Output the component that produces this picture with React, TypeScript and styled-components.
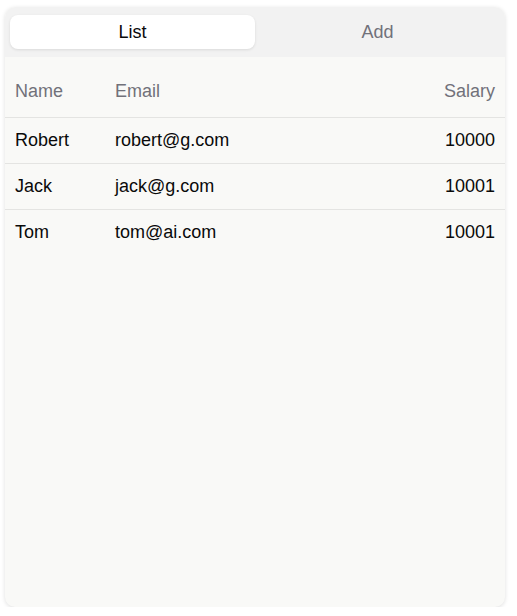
import React, { useState } from "react";
import styled, { createGlobalStyle } from "styled-components";

const Global = createGlobalStyle`
  html, body { margin: 0; padding: 0; background: #ffffff; }
  body { font-family: "Liberation Sans", Arial, Helvetica, sans-serif; }
`;

const Page = styled.div`
  padding: 7px 12px 0 5px;
`;

const Card = styled.div`
  width: 500px;
  height: 600px;
  background: #f9f9f7;
  border-radius: 10px;
  box-shadow: 0 1px 4px rgba(0, 0, 0, 0.13);
  overflow: hidden;
  display: flex;
  flex-direction: column;
`;

const TabBar = styled.div`
  background: #f2f2f2;
  padding: 8px 5px;
  display: grid;
  grid-template-columns: 1fr 1fr;
  border-radius: 10px 10px 0 0;
`;

const Tab = styled.button<{ $active: boolean }>`
  height: 34px;
  border: none;
  border-radius: 8px;
  font-family: inherit;
  font-size: 18px;
  cursor: pointer;
  background: ${(p) => (p.$active ? "#ffffff" : "transparent")};
  color: ${(p) => (p.$active ? "#09090b" : "#71717a")};
  box-shadow: ${(p) => (p.$active ? "0 1px 3px rgba(0,0,0,0.1)" : "none")};
`;

const Row = styled.div<{ $header?: boolean }>`
  display: grid;
  grid-template-columns: 100px 1fr auto;
  align-items: center;
  padding: ${(p) => (p.$header ? "8px 10px 0" : "0 10px")};
  height: ${(p) => (p.$header ? "61px" : "46px")};
  border-bottom: 1px solid #e4e4e2;
  font-size: 18px;
  color: ${(p) => (p.$header ? "#71717a" : "#0a0a0a")};
  box-sizing: border-box;
  &:last-child {
    border-bottom: none;
    height: 45px;
  }
`;

const Cell = styled.div<{ $right?: boolean }>`
  text-align: ${(p) => (p.$right ? "right" : "left")};
`;

const data = [
  { name: "Robert", email: "robert@g.com", salary: 10000 },
  { name: "Jack", email: "jack@g.com", salary: 10001 },
  { name: "Tom", email: "tom@ai.com", salary: 10001 },
];

export default function App() {
  const [tab, setTab] = useState<"list" | "add">("list");
  return (
    <Page>
      <Global />
      <Card>
        <TabBar>
          <Tab $active={tab === "list"} onClick={() => setTab("list")}>List</Tab>
          <Tab $active={tab === "add"} onClick={() => setTab("add")}>Add</Tab>
        </TabBar>
        <Row $header>
          <Cell>Name</Cell>
          <Cell>Email</Cell>
          <Cell $right>Salary</Cell>
        </Row>
        {data.map((d) => (
          <Row key={d.name}>
            <Cell>{d.name}</Cell>
            <Cell>{d.email}</Cell>
            <Cell $right>{d.salary}</Cell>
          </Row>
        ))}
      </Card>
    </Page>
  );
}
